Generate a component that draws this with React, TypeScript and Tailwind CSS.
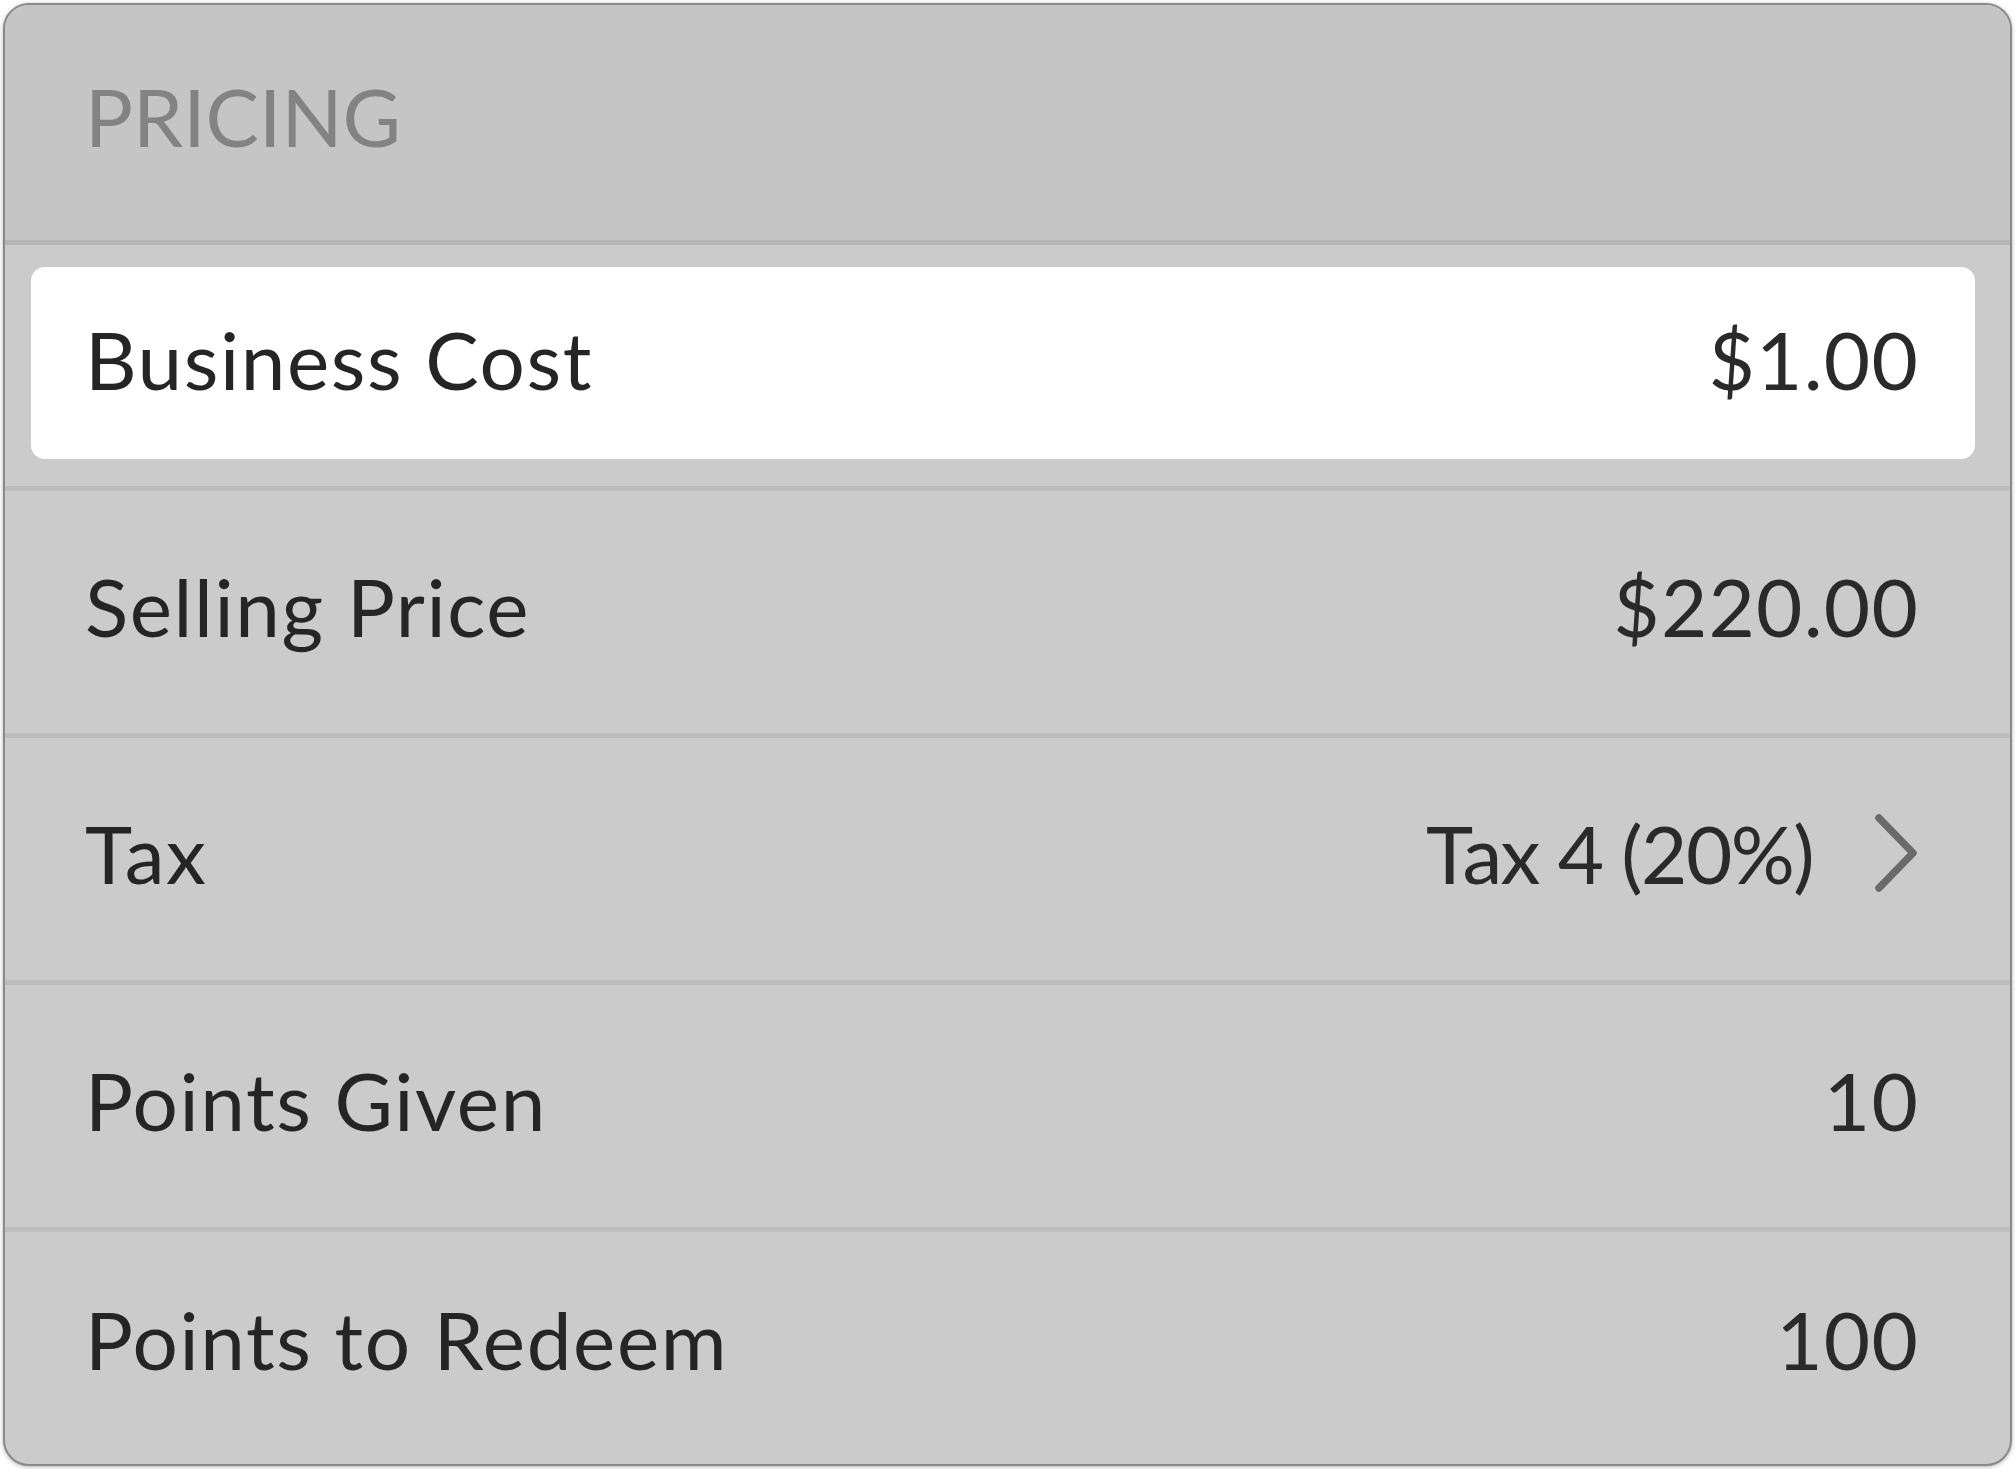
import React from 'react';

type Row = {
  label: string;
  value: string;
  chevron?: boolean;
  highlighted?: boolean;
};

const rows: Row[] = [
  { label: 'Business Cost', value: '$1.00', highlighted: true },
  { label: 'Selling Price', value: '$220.00' },
  { label: 'Tax', value: 'Tax 4 (20%)', chevron: true },
  { label: 'Points Given', value: '10' },
  { label: 'Points to Redeem', value: '100' },
];

function Chevron() {
  return (
    <svg width="46" height="80" viewBox="0 0 46 80" className="shrink-0">
      <polyline
        points="6,5 40,40 6,75"
        fill="none"
        stroke="#6a6a6a"
        strokeWidth="7.5"
        strokeLinecap="round"
        strokeLinejoin="round"
      />
    </svg>
  );
}

function PricingRow({ row, last }: { row: Row; last: boolean }) {
  const content = (
    <>
      <span className="tracking-[0.02em] text-[#252525]">{row.label}</span>
      <span className="flex items-center gap-[60px] text-[#2a2a2a]">
        <span className={row.chevron ? 'tracking-[-0.02em]' : 'tracking-[0.015em]'}>{row.value}</span>
        {row.chevron ? <Chevron /> : null}
      </span>
    </>
  );

  if (row.highlighted) {
    return (
      <div className="flex h-[246px] flex-col border-b-[5px] border-[#bdbdbd] pb-[27px] pl-[26px] pr-[35px] pt-[22px]">
        <div className="flex flex-1 items-center justify-between rounded-[14px] bg-white pb-[8px] pl-[54px] pr-[56px]">
          {content}
        </div>
      </div>
    );
  }

  return (
    <div
      className={
        last
          ? 'flex flex-1 items-center justify-between pb-[18px] pl-[80px] pr-[91px]'
          : 'flex h-[247px] items-center justify-between border-b-[5px] border-[#bdbdbd] pb-[12px] pl-[80px] pr-[91px]'
      }
    >
      {content}
    </div>
  );
}

export default function App() {
  return (
    <div className="min-h-screen bg-white p-[3px]" style={{ fontFamily: 'Lato, "Open Sans", sans-serif' }}>
      <div className="flex h-[1463px] w-[2009px] flex-col overflow-hidden rounded-[26px] border-[2px] border-[#8a8a8a] bg-[#cbcbcb] text-[80px] leading-none shadow-[0_1px_4px_rgba(0,0,0,0.3)]">
        <div className="flex h-[240px] items-center border-b-[5px] border-[#b6b6b6] bg-[#c5c5c5] pb-[14px] pl-[80px]">
          <span className="text-[80px] text-[#838383]">PRICING</span>
        </div>
        {rows.map((row, i) => (
          <PricingRow key={row.label} row={row} last={i === rows.length - 1} />
        ))}
      </div>
    </div>
  );
}
